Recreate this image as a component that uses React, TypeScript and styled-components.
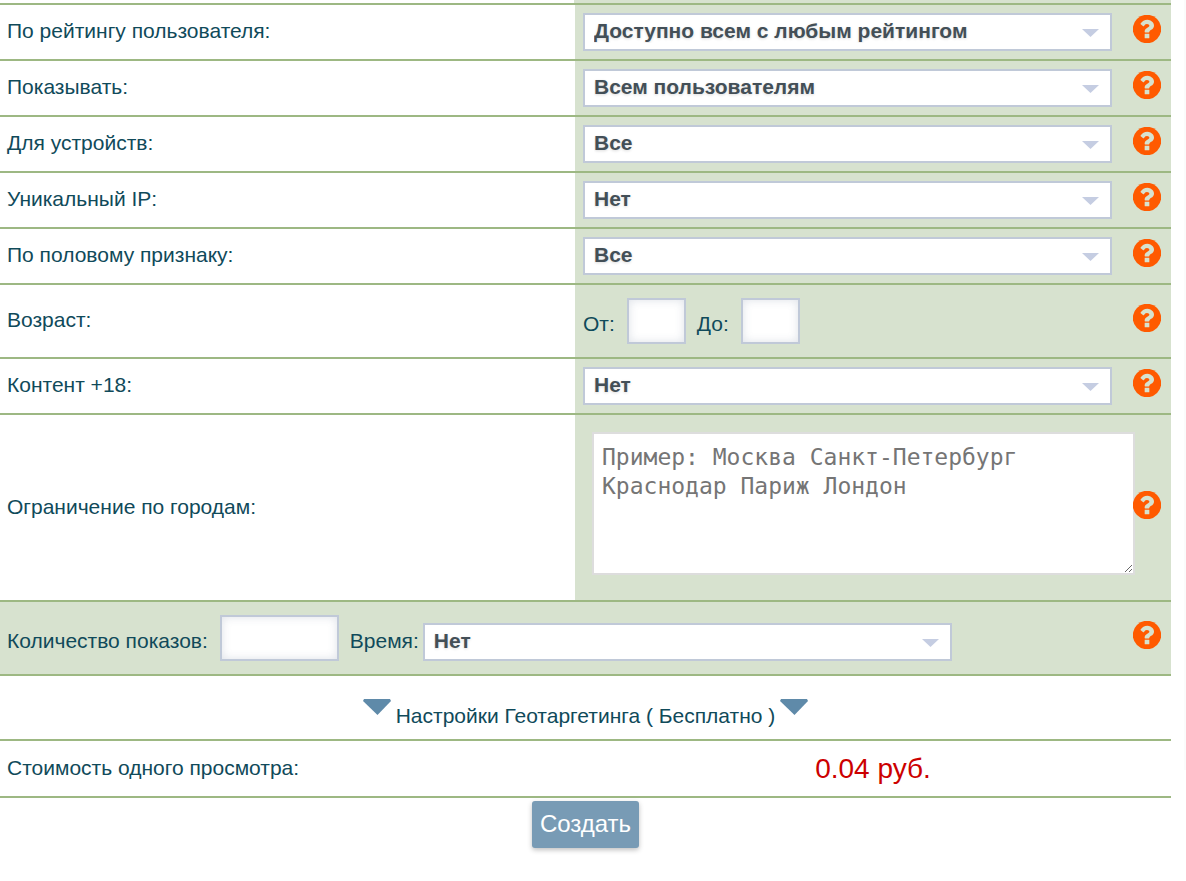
import React from "react";
import styled, { createGlobalStyle } from "styled-components";

const line = "#9db883";
const panel = "#d7e2cf";
const ink = "#104a5a";
const frame = "#c0c9d8";

const GlobalStyle = createGlobalStyle`
  *, *::before, *::after { box-sizing: border-box; }
  body {
    margin: 0;
    background: #fff;
    color: ${ink};
    font: 21px/24px "Liberation Sans", Arial, sans-serif;
  }
`;

const Page = styled.div`
  display: flex;
  align-items: flex-start;
  gap: 13px;
`;

const Form = styled.form`
  flex: 1;
  min-width: 0;
  padding-top: 3px;
  padding-bottom: 12px;
  background: linear-gradient(${panel}, ${panel}) right top / 51% 3px no-repeat;
`;

const SideEdge = styled.aside`
  flex: none;
  width: 2px;
  height: 770px;
  background: #fbfbfb;
`;

const Row = styled.div`
  display: grid;
  grid-template-columns: 575fr 545fr 51px;
  border-top: 2px solid ${line};
  background: ${panel};
`;

const Caption = styled.label`
  display: flex;
  align-items: center;
  padding: 0 7px 2px;
  background: #fff;
`;

const Field = styled.div<{ $pad?: string }>`
  min-width: 0;
  padding: ${(p) => p.$pad ?? "8px"};
`;

const HelpCell = styled.div`
  display: flex;
  align-items: center;
  justify-content: flex-end;
  padding: 0 10px 6px 0;
`;

const HelpButton = styled.button`
  position: relative;
  width: 28px;
  height: 28px;
  padding: 0;
  border: 0;
  background: none;
  cursor: pointer;

  svg { display: block; }
`;

const SelectBox = styled.div<{ $basis?: string }>`
  position: relative;
  width: ${(p) => p.$basis ?? "100%"};

  svg {
    position: absolute;
    right: 13px;
    top: 16px;
    pointer-events: none;
  }
`;

const Select = styled.select`
  display: block;
  appearance: none;
  width: 100%;
  height: 38px;
  padding: 0 36px 2px 9px;
  border: 2px solid ${frame};
  border-radius: 0;
  background: #fff;
  color: #434f57;
  font: bold 21px/24px "Liberation Sans", Arial, sans-serif;
  text-shadow: 0 1px 3px rgba(0, 0, 0, 0.15);
`;

const Inline = styled.div`
  display: flex;
  align-items: flex-end;
`;

const InlineLabel = styled.label`
  line-height: 40px;
  white-space: nowrap;

  & + ${SelectBox} { margin-left: 4px; }
`;

const NumberInput = styled.input<{ $wide?: boolean }>`
  width: ${(p) => (p.$wide ? 119 : 59)}px;
  height: 46px;
  margin: 0 11px 0 12px;
  padding: 0 8px;
  border: 2px solid ${frame};
  background: #fff;
  box-shadow: inset 0 0 10px rgba(90, 110, 140, 0.2);
  color: ${ink};
  font: inherit;
`;

const Cities = styled.textarea`
  display: block;
  width: calc(100% + 14px);
  height: 143px;
  margin-left: 9px;
  padding: 9px 8px;
  border: 2px solid #dddddd;
  background: #fff;
  color: ${ink};
  font: 23px/29px "DejaVu Sans Mono", monospace;
  resize: both;

  &::placeholder { color: #757575; opacity: 1; }
`;

const CountRow = styled.div`
  display: flex;
  justify-content: space-between;
  border-top: 2px solid ${line};
  background: ${panel};

  ${Inline} {
    flex: 1;
    padding: 13px 0 13px 7px;
  }
`;

const GeoRow = styled.div`
  border-top: 2px solid ${line};
  padding: 23px 0 11px;
`;

const GeoToggle = styled.button`
  display: flex;
  align-items: flex-start;
  gap: 5px;
  margin: 0 auto;
  padding: 0;
  border: 0;
  background: none;
  color: inherit;
  font: inherit;
  cursor: pointer;

  span { padding-top: 5px; }
`;

const CostRow = styled.div`
  display: grid;
  grid-template-columns: 575fr 596fr;
  border-top: 2px solid ${line};
  border-bottom: 2px solid ${line};
`;

const Price = styled.output`
  padding: 12px 0 11px;
  color: #cc0000;
  font-size: 28px;
  line-height: 32px;
  text-align: center;
`;

const Submit = styled.button`
  display: block;
  height: 47px;
  margin: 3px auto 0;
  padding: 0 8px 2px;
  border: 0;
  border-radius: 3px;
  background: #789bb5;
  box-shadow: 0 2px 5px rgba(0, 0, 0, 0.25);
  color: #fff;
  font: 24px/28px "Liberation Sans", Arial, sans-serif;
  cursor: pointer;
`;

const Help = () => (
  <HelpButton type="button" aria-label="Справка">
    <svg width="28" height="28" viewBox="128 128 1536 1536">
      <circle cx="896" cy="896" r="780" fill="#ff5a00" />
      <path
        d="M1024 1376v-192q0-14-9-23t-23-9h-192q-14 0-23 9t-9 23v192q0 14 9 23t23 9h192q14 0 23-9t9-23zm256-672q0-88-55.5-163t-138.5-116-170-41q-243 0-371 213-15 24 8 42l132 100q7 6 19 6 16 0 25-12 53-68 86-92 34-24 86-24 48 0 85.5 26t37.5 59q0 38-20 61t-68 45q-63 28-115.5 86.5t-52.5 125.5v36q0 14 9 23t23 9h192q14 0 23-9t9-23q0-19 21.5-49.5t54.5-49.5q32-18 49-28.5t46-35 44.5-48 28-60.5 12.5-81z"
        fill={panel}
      />
    </svg>
  </HelpButton>
);

const Dropdown = ({ id, value, basis }: { id: string; value: string; basis?: string }) => (
  <SelectBox $basis={basis}>
    <Select id={id} defaultValue={value}>
      <option>{value}</option>
    </Select>
    <svg width="17" height="8" viewBox="0 0 17 8">
      <path d="M0 0h17L8.5 8z" fill="#c5cde2" />
    </svg>
  </SelectBox>
);

const SelectRow = ({ id, label, value }: { id: string; label: string; value: string }) => (
  <Row>
    <Caption htmlFor={id}>{label}</Caption>
    <Field>
      <Dropdown id={id} value={value} />
    </Field>
    <HelpCell>
      <Help />
    </HelpCell>
  </Row>
);

const Triangle = () => (
  <svg width="28" height="16" viewBox="0 0 28 16">
    <path d="M1 0h26l1 2-13.5 14L0 2z" fill="#5f8aa9" />
  </svg>
);

const targeting = [
  { id: "rating", label: "По рейтингу пользователя:", value: "Доступно всем с любым рейтингом" },
  { id: "audience", label: "Показывать:", value: "Всем пользователям" },
  { id: "devices", label: "Для устройств:", value: "Все" },
  { id: "ip", label: "Уникальный IP:", value: "Нет" },
  { id: "gender", label: "По половому признаку:", value: "Все" },
];

export default function App() {
  return (
    <>
      <GlobalStyle />
      <Page>
        <Form onSubmit={(e) => e.preventDefault()}>
          {targeting.map((row) => (
            <SelectRow key={row.id} {...row} />
          ))}
          <Row>
            <Caption htmlFor="age-from">Возраст:</Caption>
            <Field $pad="13px 8px">
              <Inline>
                <InlineLabel htmlFor="age-from">От:</InlineLabel>
                <NumberInput id="age-from" type="text" />
                <InlineLabel htmlFor="age-to">До:</InlineLabel>
                <NumberInput id="age-to" type="text" />
              </Inline>
            </Field>
            <HelpCell>
              <Help />
            </HelpCell>
          </Row>
          <SelectRow id="adult" label="Контент +18:" value="Нет" />
          <Row>
            <Caption htmlFor="cities">Ограничение по городам:</Caption>
            <Field $pad="17px 8px 25px">
              <Cities id="cities" placeholder="Пример: Москва Санкт-Петербург Краснодар Париж Лондон" />
            </Field>
            <HelpCell>
              <Help />
            </HelpCell>
          </Row>
          <CountRow>
            <Inline>
              <InlineLabel htmlFor="count">Количество показов:</InlineLabel>
              <NumberInput id="count" type="text" $wide />
              <InlineLabel htmlFor="period">Время:</InlineLabel>
              <Dropdown id="period" value="Нет" basis="47%" />
            </Inline>
            <HelpCell>
              <Help />
            </HelpCell>
          </CountRow>
          <GeoRow>
            <GeoToggle type="button">
              <Triangle />
              <span>Настройки Геотаргетинга ( Бесплатно )</span>
              <Triangle />
            </GeoToggle>
          </GeoRow>
          <CostRow>
            <Caption htmlFor="cost">Стоимость одного просмотра:</Caption>
            <Price id="cost">0.04 руб.</Price>
          </CostRow>
          <Submit type="submit">Создать</Submit>
        </Form>
        <SideEdge />
      </Page>
    </>
  );
}
